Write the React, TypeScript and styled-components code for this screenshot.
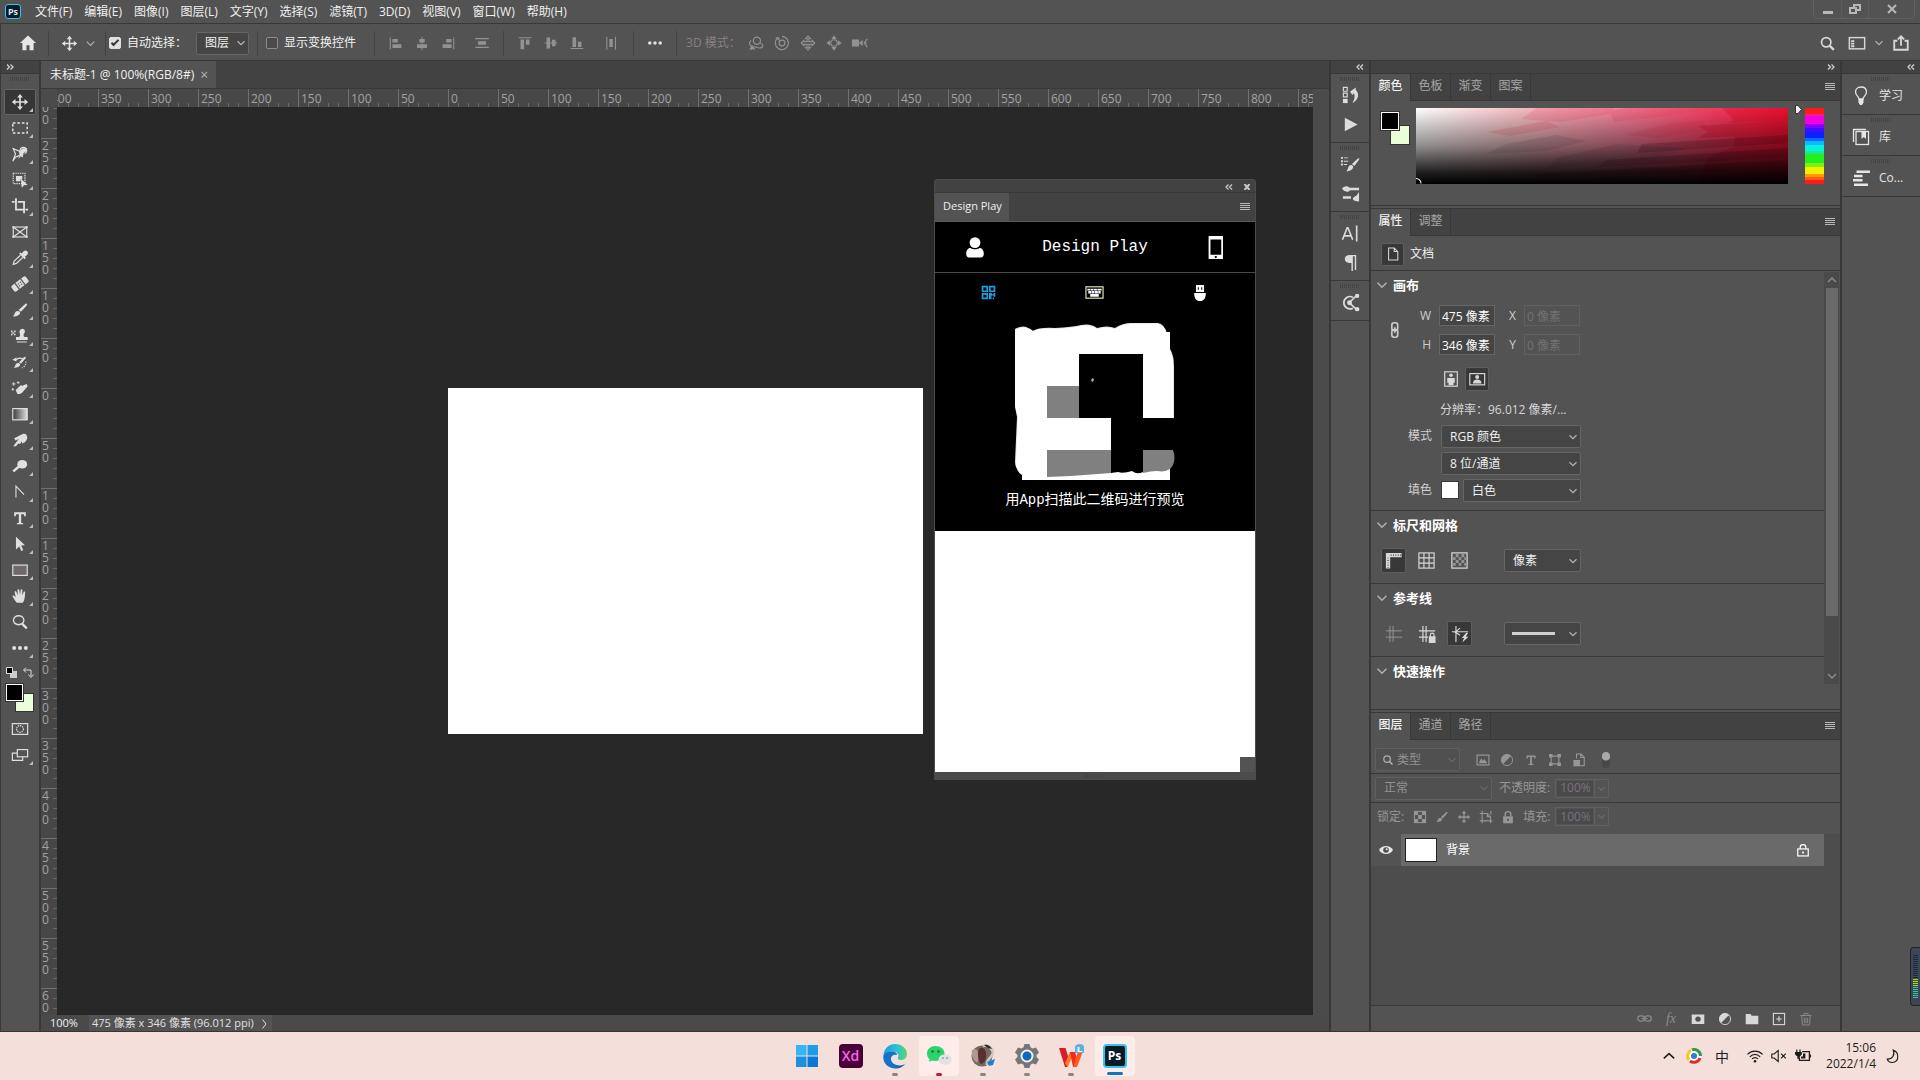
import React from "react";
import styled, { createGlobalStyle, css } from "styled-components";

const sans = `"Open Sans", "Noto Sans CJK SC", sans-serif`;

const c = {
  base: "#535353",
  dark: "#424242",
  line: "#383838",
  canvas: "#282828",
  field: "#454545",
  fieldLine: "#666666",
  text: "#f0f0f0",
  dim: "#a6a6a6",
  icon: "#d8d8d8",
};

const Global = createGlobalStyle`
  *, *::before, *::after { box-sizing: border-box; }
  html, body { margin: 0; background: ${c.base}; }
  body { font: 12px/16px ${sans}; color: ${c.text}; overflow: hidden; }
  button, input, select { font: inherit; color: inherit; margin: 0; }
  h2, h3, p { margin: 0; font: inherit; }
`;

/* ---------- icons ---------- */

const F = { fill: "currentColor", stroke: "none" };

const art: Record<string, React.ReactNode> = {
  home: <path {...F} d="M10 2.500 2 10h2.400v7.200h4.100v-5h3v5h4.100V10H18z" />,
  move: <path {...F} d="M10 1 6.800 5h2.300v4.100H5V6.800L1 10l4 3.200v-2.300h4.100V15H6.800l3.200 4 3.200-4h-2.300v-4.100H15v2.300l4-3.200-4-3.200v2.300h-4.100V5h2.300z" />,
  chevron: <path strokeWidth="1.700" d="M5 7.500 10 12.500l5-5" />,
  alignL: <g {...F}><path d="M3 4h1.200v13H3zM6 5.500h6v4H6zM6 11.500h10v4H6z" /></g>,
  alignC: <g {...F}><path d="M9.500 3h1v15h-1zM7 5.500h6v4H7zM4.500 11.500h11v4h-11z" /></g>,
  alignR: <g {...F}><path d="M15.800 4H17v13h-1.200zM8 5.500h6v4H8zM4 11.500h10v4H4z" /></g>,
  distV: <g {...F}><path d="M2.500 4.500h15v1.200h-15zM5.500 8h9v4h-9zM2.500 14.300h15v1.200h-15z" /></g>,
  alignT: <g {...F}><path d="M3 3.500h14v1.200H3zM5 6h4v11H5zM11 6h4v6h-4z" /></g>,
  alignM: <g {...F}><path d="M3 9.500h14v1H3zM5 4h4v12H5zM11 6.500h4v7h-4z" /></g>,
  alignB: <g {...F}><path d="M3 15.500h14v1.200H3zM5 3.500h4v11H5zM11 8.500h4v6h-4z" /></g>,
  distH: <g {...F}><path d="M4.800 3h1.200v14.500H4.800zM8.200 5.500h3.800v9H8.200zM14.300 3h1.200v14.500h-1.200z" /></g>,
  more: <g {...F}><circle cx="3.500" cy="10" r="2.200" /><circle cx="10" cy="10" r="2.200" /><circle cx="16.500" cy="10" r="2.200" /></g>,
  orbit: <g><circle cx="11" cy="7.500" r="4" /><path d="M4.500 7c-3 3-2 6 2 7.500M14.500 10c4 1.500 4 5 .5 5.500-2 .3-5-.5-7-1.500" /><path {...F} d="m2.500 17.500 7-.5-4-5z" /></g>,
  roll: <g><circle cx="10" cy="10" r="3.200" /><path d="M5 4.500A7.300 7.300 0 1 0 10 2.700" /><path {...F} d="M2.500 3.500h4.500v4z" /></g>,
  pan3d: <path d="M10 2 7.500 5H9v3.500H5.500V7L2.500 10l3 3v-1.500H9V15H7.500l2.500 3 2.500-3H11v-3.500h3.500V13l3-3-3-3v1.500H11V5h1.500z" />,
  slide3d: <g><circle cx="10" cy="10" r="3.600" /><path {...F} d="m10 1.500-3 4h6zM10 18.500l-3-4h6zM1.500 10l4-3v6zM18.500 10l-4-3v6z" /></g>,
  cam: <g><path {...F} d="M1 6h8v8H1zM9 10l4-3.500v7z" /><path d="M18 5.500 14.800 10l3.200 4.500M15 10h2.500" /></g>,
  search: <g><circle cx="8.500" cy="8.500" r="5.500" strokeWidth="2" /><path strokeWidth="2.600" d="m12.500 12.500 5 5" /></g>,
  layout: <g strokeWidth="1.600"><rect x="1.500" y="4" width="17" height="12.500" /><path {...F} d="M3.500 7h3.500v2H3.500zM3.500 9.800h3.500v2H3.500zM3.500 12.600h3.500v2H3.500z" /></g>,
  share: <g strokeWidth="2"><path d="M6 7.500H2.500V17.500h15V7.500H14M10 13V3M6.500 6 10 2.500 13.500 6" /></g>,
  marquee: <rect x="2" y="4.500" width="16" height="11" strokeDasharray="3 2" strokeWidth="1.600" />,
  lasso: <g><path d="M9.500 11.500 5 13.500 2 18l3-8L2.500 4l7 3L11 3.500c3-2 6.500-.5 6.500 2.500 0 2-1 3-2.500 3.500" /><path {...F} d="m9 7.500 4-4h4v3.500l-3 2-1 5-2-1.500-3 3 1.500-4z" /></g>,
  objsel: <g><rect x="2.500" y="2.500" width="13" height="11.500" strokeDasharray="1.500 1" /><path {...F} d="M5.500 5.500h7V9l-2 .5v2h-5z" /><path {...F} d="m11 8.500 7.500 7-4 .2-2.500 3z" /></g>,
  crop: <g strokeWidth="2"><path d="M5.500 1.500V14H14M1 5.500h3M7.500 5.500h7V18M16 14h3" /></g>,
  frame: <g><rect x="2.500" y="4.500" width="15" height="11" /><path d="m2.500 4.500 15 11M17.500 4.500l-15 11" /><path {...F} d="M1.500 3.500h2v2h-2zM16.500 3.500h2v2h-2zM1.500 14.500h2v2h-2zM16.500 14.500h2v2h-2z" /></g>,
  eyedrop: <g><path d="m10.500 7-7 6.500L2.500 17l3.500-1 7-6.500" /><path {...F} d="m9 5 1.500-1.200 1.500 1.200c2-3.500 4.500-4 6-2.500s1 4-2.500 6l1 1.500-1.500 1.500z" /></g>,
  heal: <g transform="rotate(-38 10 10)"><rect {...F} x="0" y="6" width="20" height="8" rx="2" /><path stroke="#535353" d="M6 6v8M14 6v8" /><circle cx="8.500" cy="8.800" r=".8" fill="#535353" stroke="none" /><circle cx="11.500" cy="8.800" r=".8" fill="#535353" stroke="none" /><circle cx="8.500" cy="11.400" r=".8" fill="#535353" stroke="none" /><circle cx="11.500" cy="11.400" r=".8" fill="#535353" stroke="none" /></g>,
  brush: <g {...F}><path d="M17.500 3c.8.500.5 1.200-.5 2.500l-6 6.500-2.500-2L15.500 3.500c.8-.8 1.500-.9 2-.5z" /><path d="M7.500 11c2 0 3 1.500 2.500 3-1 2.500-4.500 3.500-8 3 1.500-1 1.500-1.500 2-3s1.500-3 3.500-3z" /></g>,
  stamp: <g {...F}><path d="M9.500 5a3 3 0 1 1 5 2.300c-.8.900-.8 3 .5 3.700h3.500v3.500h-13V11H9c1.300-.7 1.300-2.800.8-3.700A3 3 0 0 1 9.500 5zM6.500 16h11v1.200h-11z" /><path d="M0 4h1.700v1.700H0zM3.400 4h1.700v1.700H3.400zM1.700 5.700h1.700v1.700H1.700zM0 7.400h1.700v1.700H0zM3.400 7.400h1.700v1.700H3.400z" /></g>,
  history: <g><path {...F} d="M16 4.500c.8.500.5 1-.2 2L11 12l-2-1.700 5-5.300c.8-.8 1.500-.9 2-.5zM8.200 11c1.500.2 2.300 1.300 1.800 2.700-.8 2-4 3-7 2.600 2-1 1.500-5.500 5.200-5.300z" /><path d="M5 8c2.500-2.500 5-3 8-1.500" /><path {...F} d="m1.500 7.500 4.500-2.500v4.500z" /><path strokeDasharray="1.200 1.500" d="M16.500 9.500c.5 3-1 5.500-4.500 7" /></g>,
  eraser: <g><path {...F} d="m11 8 6.500-2.500L18.500 8 12 15.500l-4 .5-2-3z" /><path d="m6 12.500 5-5 3.500 3.500-4.500 5H7.500z" /><path d="M3 3.500v4M1 5.500h4M8 2.500v3M6.500 4h3M2 10v3M.8 11.500h2.500" strokeWidth="1" /></g>,
  gradient: <g><defs><linearGradient id="tool-gradient"><stop stopColor="#3a3a3a" /><stop offset="1" stopColor="#e0e0e0" /></linearGradient></defs><rect x="2" y="4" width="16" height="12.500" fill="url(#tool-gradient)" /></g>,
  smudge: <path {...F} d="M2.500 17 8.500 9 5 10.500 3.500 8 13 3.200c3-.9 5.500 1.200 5 4.800-.5 3-2.500 5-5.500 6l-.5-2.700-1.800 3.200-2-.5-2.700 3z" />,
  dodge: <g {...F}><ellipse cx="12.500" cy="8" rx="5.500" ry="4.800" /><path d="m8 9.500 2 2-6.500 5.500-2-2z" /></g>,
  pen: <path d="M5.500 16V3.500L14.500 13" strokeWidth="1.200" />,
  type: <path {...F} d="M3.500 3.500h13V8h-1.700l-.5-2.300h-3v9.600l2.200.4v1.300H6.500v-1.300l2.200-.4V5.700h-3L5.200 8H3.500z" />,
  path: <path {...F} d="m5.500 2 10 9.500-4.300.3 2.500 5-2.200 1-2.400-5L5.500 16z" />,
  rect: <rect x="2" y="4.500" width="16" height="11.500" fill="#6f6969" />,
  hand: <path {...F} d="M6.500 17.500C4.500 15.500 3 12.500 1.500 10c1-1 2-.5 3.700 1.500L4 5.200c.9-.9 1.700-.6 2 .3l1.500 4L7.200 3c.8-.8 1.800-.6 2 .3l.8 5.700.8-6c.9-.7 1.800-.4 1.900.5l-.2 6 1.700-4.300c.9-.6 1.700-.2 1.600.8-.5 3.500 0 8-2.800 11.500z" />,
  zoom: <g><ellipse cx="8.500" cy="8" rx="5.800" ry="5" strokeWidth="1.500" /><path strokeWidth="2.600" d="m12.500 12 5 5" /></g>,
  mask: <g><rect x="1.500" y="4" width="17" height="12" /><circle cx="10" cy="10" r="3.800" strokeDasharray="1.500 1" /></g>,
  screens: <g><rect x="7" y="4" width="11.500" height="8" /><path d="M7 8H1.500v8h11.500v-4" /></g>,
  dockHistory: <g><path {...F} d="M2 13.500h5V18H2z" /><path strokeWidth="1.200" d="M2.500 1.500h4v4h-4zM2.500 7.500h4v4h-4z" /><path {...F} d="m9.500 6 6-4.500v2.700c4 3.500 3.500 10-3.500 13.800 2.500-4 3-7.500 1.500-10.300L12 9.500z" /></g>,
  play: <path {...F} d="m4 3 13.500 7L4 17z" />,
  brushSet: <g {...F}><path d="M19 3.500c.6.500.4 1-.4 2l-4.600 6-2.500-2 6-5.500c.7-.7 1-.8 1.500-.5zM10.500 10.500c1.800.2 2.700 1.500 2.200 3-.7 2.200-3.500 3.800-7.200 3.800 2.500-2 1.500-6.500 5-6.800zM0 2h2v2H0zM3 2.500h4.500v1H3zM0 5.500h2v2H0zM3 6h4.500v1H3zM0 9h2v2H0zM3 9.500h3.500v1H3z" /></g>,
  sliders: <g {...F}><path d="M1 5c3-3.500 6-3 8-1h10v2.500H9.500C8 9 4 8.500 1 5zM2 13h8.500v2.500H2z" /><path d="M19 8.500V18.500c-6 0-9-3-4-5.500 2-.8 2.500-2.500 4-4.500z" /></g>,
  char: <path d="M1.500 16.500 6.500 4h.8l5 12.500M3.500 12.500h7M16.500 1.500v17" strokeWidth="1.700" />,
  para: <path {...F} d="M16 2v16h-1.500V3.500h-2V19h-1.500v-8.500C7 11 4 9.500 4 6.300 4 3.500 6.500 2 9.500 2z" />,
  plugin: <g><path strokeWidth="1.800" d="M12.500 4.500A6.500 6.500 0 1 0 12.500 16" /><circle {...F} cx="9" cy="10.200" r="2.600" /><path strokeWidth="1.600" d="m10 9 6-6M10 11.500l6 5.500" /><circle {...F} cx="17" cy="3" r="2.300" /><circle {...F} cx="17" cy="17" r="2.300" /></g>,
  bulb: <g><path d="M8 13c0-2.500-3.500-3.500-3.500-7C4.500 3 6.700 1 10 1s5.500 2 5.500 5c0 3.500-3.500 4.500-3.500 7z" /><path {...F} d="M7.500 13h5v3.500L11 19H9l-1.500-2.500z" /></g>,
  library: <g><path d="M2.500 15V2.500H15" /><rect x="5" y="4.500" width="12.500" height="13" /><path {...F} d="M10.500 5h4.500v7l-2.200-2-2.300 2z" /></g>,
  comments: <path {...F} d="M5.500 2.500H19V5H5.500zM3 6.800h8.500v2.500H3zM2 11h9.500v2.500H2zM3 15.500h14V18H3z" />,
  doc: <path d="M4.500 2.500h7l4.500 4.500v10.500H4.500zM11.500 2.500V7H16" />,
  link: <g strokeWidth="1.800"><rect x="6.500" y="2" width="6.500" height="8.500" rx="2.500" /><rect x="6.500" y="9.500" width="6.500" height="8.500" rx="2.500" /><path d="M9.800 7v6" /></g>,
  portrait: <g><rect x="3" y="2" width="14" height="16" /><circle {...F} cx="10" cy="5.800" r="2" /><path {...F} d="M5.800 9h8.400v5.300h-1.500V17h-5.400v-2.700H5.800z" /></g>,
  landscape: <g><rect x="2" y="4" width="16.500" height="12.500" /><circle {...F} cx="10.200" cy="7.700" r="2.200" /><path {...F} d="M5.500 15c0-3.200 1.700-4.500 4.700-4.500s4.800 1.300 4.800 4.500z" /></g>,
  rulers: <g><path {...F} d="M2 2h16.500v4.500H6.500v12H2z" /><path stroke="#383838" strokeWidth="1.200" strokeDasharray="1 1.500" d="M7 4.300h11M4.300 7v11" /></g>,
  grid: <g strokeWidth="1.200"><rect x="2" y="2" width="16" height="16" /><path d="M7.300 2v16M12.700 2v16M2 7.300h16M2 12.700h16" /></g>,
  checker: <g><rect x="2" y="2" width="16" height="16" /><path fill="#949494" stroke="none" d="M6 3h3v3.500H6zM12 3h3v3.500h-3zM3 6.500h3v3H3zM9 6.500h3v3H9zM15 6.500h2.500v3H15zM6 9.500h3v3H6zM12 9.500h3v3h-3zM3 12.500h3v3H3zM9 12.500h3v3H9zM15 12.500h2.500v3H15z" /></g>,
  guides: <path strokeWidth="1" d="M5.500 1v18M9 1v18M1 6.500h18M1 13.500h18" />,
  guidesLock: <g><path strokeWidth="1.300" d="M5.500 1v18M9 1v18M1 6.500h18M1 13.500h10" /><path {...F} d="M12 12.500h7.500V20H12z" /><path d="M13.800 13v-2a2 2 0 0 1 4 0v2" /></g>,
  guidesSmart: <g><path strokeWidth="1.300" d="M5.500 1v18M1 7.500h18M4 8.500l6-5M5 8l5 3.500" /><path {...F} d="m17 8.500-5 6h2.500l-2 5 7-6.500h-3l2.500-4.500z" /></g>,
  image: <g><rect x="1.500" y="3" width="17" height="14" strokeWidth="1.700" /><path {...F} d="m4 14.500 3.500-7 2.500 4 2-3 4 6z" /></g>,
  adjust: <g><circle cx="10" cy="10" r="8" /><path {...F} d="M15.700 4.300A8 8 0 0 0 4.300 15.700z" /></g>,
  shape: <g><path strokeWidth="1.600" d="M4.500 4.500h11v11h-11z" /><path {...F} d="M1.500 1.500h5v5h-5zM13.500 1.500h5v5h-5zM1.500 13.500h5v5h-5zM13.500 13.500h5v5h-5z" /></g>,
  smart: <g strokeWidth="1.600"><path d="M6.500 8V1.500H13l4.500 4.500v12H12M12.500 1.500v5H17.500" /><path {...F} d="M2 10h9.500v9H2z" /></g>,
  checkerSolid: <g><rect x="2" y="2" width="16" height="16" strokeWidth="1.500" /><path {...F} d="M2 2h5.300v5.300H2zM12.700 2H18v5.300h-5.300zM7.300 7.300h5.400v5.400H7.300zM2 12.700h5.300V18H2zM12.700 12.700H18V18h-5.300z" /></g>,
  artboard: <path strokeWidth="1.600" d="M4.500 1v18M1 5h11l4.500 4.500V19M1 15.500h18M17 1.500v5M12 5v4.500h4.500" />,
  lock: <g><path {...F} d="M3 9h14v10H3z" /><path strokeWidth="2" d="M6 9V6c0-5 8-5 8 0v3" /><circle cx="10" cy="14" r="1.600" fill="#535353" stroke="none" /></g>,
  lockOpen: <g strokeWidth="1.700"><rect x="2.500" y="8.500" width="15" height="10" /><path d="M6 8.500V6c0-5 8-5 8 0v2.500" /><circle {...F} cx="10" cy="13.500" r="1.500" /></g>,
  eye: <g><path {...F} d="M0 10c4-7.500 16-7.500 20 0-4 7.500-16 7.500-20 0z" /><circle cx="10" cy="10" r="4" fill="#4d4d4d" stroke="none" /><circle {...F} cx="11" cy="9" r="1.500" /></g>,
  chain: <g strokeWidth="1.600"><rect x="1" y="6.500" width="9" height="7" rx="3.500" /><rect x="10" y="6.500" width="9" height="7" rx="3.500" /><path d="M6 10h8" /></g>,
  maskAdd: <path {...F} fillRule="evenodd" d="M1 3.500h18v13.500H1zM10 6.300a3.900 3.900 0 1 0 .01 0z" />,
  folder: <path {...F} d="M1 3h7l1.500 2.500H19v12H1z" />,
  add: <g><rect x="2" y="2" width="16" height="16" strokeWidth="1.600" /><path d="M10 6v8M6 10h8" strokeWidth="1.600" /></g>,
  trash: <path d="M2 5h16M7 4.500V2h6v2.500M4 5l.8 13.500h10.400L16 5M7.600 8v8M10 8v8M12.400 8v8" />,
  user: <g {...F}><circle cx="10" cy="6" r="4.900" /><path d="M2 16c0-3.500 2-5.200 4-5.200 2.500 1.800 5.500 1.800 8 0 2 0 4 1.700 4 5.200 0 2-1 3.500-2.500 3.500h-11C3 19.500 2 18 2 16z" /></g>,
  phone: <path {...F} fillRule="evenodd" d="M4 0h12.500v20H4zM5.600 3v13.300H15V3zM10.200 17.300a.9.900 0 1 0 .1 0z" />,
  qr: <g {...F} fillRule="evenodd"><path d="M2 2h7.500v7.500H2zM4 4v3.500h3.500V4zM10.500 2H18v7.500h-7.500zM12.500 4v3.500H16V4zM2 10.500h7.500V18H2zM4 12.500V16h3.500v-3.500zM10.500 10.500H14V12h2v-1.500h2V15h-2v-1.500h-2.500V18h-3zM15 16h1.500v2H15z" /></g>,
  keyboard: <g><rect x="1" y="4" width="18" height="12" stroke="#d8d8b0" /><path {...F} d="M2.500 6h3v2h-3zM6 6h3v2H6zM9.500 6h3v2h-3zM13 6h4.500v2H13zM3.500 8.500h3v2.500h-3zM7 8.500h3v2.500H7zM10.500 8.500h3v2.500h-3zM14 8.500h2.500v2.500H14zM5.500 11.500h9V14.500h-9z" /></g>,
  usb: <g {...F} fillRule="evenodd"><path d="M5.500 1h9v8h-9zM7.500 3.500v3h1.200v-3zM11.300 3.500v3h1.200v-3zM3.500 10h13c0 5.500-2 9-6.500 9s-6.500-3.500-6.500-9z" /></g>,
  up: <path d="m3.500 13 6.500-6 6.500 6" strokeWidth="1.800" />,
  wifi: <g strokeWidth="1.500"><path d="M.5 8c5.500-5.500 13.500-5.500 19 0M3.500 11c4-4 9-4 13 0M6.300 13.700c2.200-2.300 5.200-2.300 7.400 0" /><circle {...F} cx="10" cy="16.500" r="1.600" /></g>,
  mute: <path strokeWidth="1.400" d="M1 7.500h3L9 3v14l-5-4.500H1zM12.500 7l6 6M18.500 7l-6 6" />,
  battery: <g><path strokeWidth="1.600" d="M9 4.500h9v11H5.500v-3" /><path {...F} d="M18.500 8H20v4h-1.500zM10 7h3v6H7.500v-2.500H10zM0 5h1.500V2h1.500v3h2.500V2H7v3h1.500v3L6 10.500v3H3v-3L0 8z" /></g>,
  moon: <path strokeWidth="1.500" d="M11 1.500c8.500 3 8 16-1 16.500-3.500.3-6-1.500-7-4.500 7 0 10.500-5.500 8-12z" />,
};

const Svg = styled.svg<{ $size: number }>`
  display: block;
  flex: none;
  width: ${(p) => p.$size}px;
  height: ${(p) => p.$size}px;
  fill: none;
  stroke: currentColor;
  stroke-width: 1.3;
`;

const Icon = ({ name, size = 20 }: { name: string; size?: number }) => (
  <Svg $size={size} viewBox="0 0 20 20" aria-hidden="true">
    {art[name]}
  </Svg>
);

/* ---------- shared controls ---------- */

const IconButton = styled.button<{ $w?: number; $h?: number; $on?: boolean; $tone?: string }>`
  display: flex;
  align-items: center;
  justify-content: center;
  flex: none;
  width: ${(p) => p.$w ?? 24}px;
  height: ${(p) => p.$h ?? 24}px;
  padding: 0;
  border: 1px solid ${(p) => (p.$on ? "#5e5e5e" : "transparent")};
  border-radius: 2px;
  background: ${(p) => (p.$on ? "#383838" : "transparent")};
  color: ${(p) => p.$tone ?? c.icon};
`;

const SelectBox = styled.div<{ $w: number; $off?: boolean; $pad?: number }>`
  display: grid;
  align-items: center;
  flex: none;
  width: ${(p) => p.$w}px;
  height: 23px;
  border: 1px solid ${(p) => (p.$off ? "#606060" : c.fieldLine)};
  border-radius: 2px;
  background: ${(p) => (p.$off ? "#505050" : c.field)};
  color: ${(p) => (p.$off ? "#929292" : c.text)};
  > * { grid-area: 1 / 1; }
  > svg { pointer-events: none; }
  > svg:last-child { justify-self: end; color: ${(p) => (p.$off ? "#686868" : "#b4b4b4")}; }
  select {
    appearance: none;
    width: 100%;
    height: 100%;
    padding: 0 16px 0 ${(p) => p.$pad ?? 8}px;
    border: 0;
    background: none;
  }
`;

type SelectProps = { id?: string; label: string; value: string; w: number; off?: boolean; pad?: number; children?: React.ReactNode };
const Select = ({ id, label, value, w, off, pad, children }: SelectProps) => (
  <SelectBox $w={w} $off={off} $pad={pad}>
    <select id={id} aria-label={label}><option>{value}</option></select>
    {children}
    <Icon name="chevron" size={14} />
  </SelectBox>
);

const Check = styled.input`
  appearance: none;
  width: 12px;
  height: 12px;
  border: 1px solid #8c8c8c;
  border-radius: 2px;
  background: #4a4a4a;
  &:checked {
    border-color: #e0e0e0;
    background: #e0e0e0;
    display: grid;
    place-items: center;
  }
  &:checked::before {
    content: "";
    width: 8px;
    height: 4px;
    margin-bottom: 2px;
    border: solid #383838;
    border-width: 0 0 2px 2px;
    transform: rotate(-45deg);
  }
`;

const CheckLabel = styled.label`
  display: flex;
  align-items: center;
  gap: 6px;
  white-space: nowrap;
`;

/* ---------- application bars ---------- */

const Shell = styled.div`
  display: flex;
  flex-direction: column;
  height: 100vh;
  background: ${c.base};
`;

const MenuBar = styled.header`
  display: flex;
  align-items: center;
  flex: none;
  height: 24px;
  padding-left: 5px;
  border-bottom: 1px solid ${c.line};
`;

const PsMark = styled.span<{ $big?: boolean }>`
  display: grid;
  place-items: center;
  width: ${(p) => (p.$big ? 24 : 16)}px;
  height: ${(p) => (p.$big ? 24 : 15)}px;
  border: ${(p) => (p.$big ? 2 : 1)}px solid #31c5f0;
  border-radius: ${(p) => (p.$big ? 4 : 3)}px;
  background: #0a1a26;
  color: ${(p) => (p.$big ? "#fff" : "#c9f1ff")};
  font: 700 ${(p) => (p.$big ? 12 : 9)}px/12px ${sans};
`;

const Menu = styled.nav`
  display: flex;
  flex: 1;
  padding-left: 8px;
`;

const MenuItem = styled.button`
  padding: 0 6px;
  border: 0;
  background: none;
  white-space: nowrap;
`;

const WindowControls = styled.div`
  display: flex;
  align-self: flex-start;
  margin-right: 5px;
  border: solid #616161;
  border-width: 0 1px 1px;
  border-radius: 0 0 4px 4px;
`;

const WindowButton = styled.button<{ $w: number }>`
  display: grid;
  place-items: center;
  width: ${(p) => p.$w}px;
  height: 18px;
  padding: 0;
  border: 0;
  border-left: 1px solid #5c5c5c;
  background: none;
  color: #b8b8b8;
  &:first-child { border-left: 0; }
`;

const OptionsBar = styled.div`
  display: flex;
  align-items: center;
  flex: none;
  height: 37px;
  padding: 2px 7px 0 4px;
  border-left: 1px solid ${c.line};
  border-bottom: 1px solid ${c.line};
`;

const Divider = styled.span<{ $m?: number }>`
  flex: none;
  width: 1px;
  height: 25px;
  margin: 0 ${(p) => p.$m ?? 8}px;
  background: #434343;
`;

const Spacer = styled.span<{ $w?: number }>`
  flex: ${(p) => (p.$w ? "none" : "1")};
  width: ${(p) => (p.$w ? p.$w + "px" : "auto")};
`;

const ModeLabel = styled.span`
  margin-right: 2px;
  color: #8a8080;
  white-space: nowrap;
`;

/* ---------- workspace ---------- */

const Workspace = styled.div`
  display: flex;
  flex: 1;
  min-height: 0;
  background: ${c.line};
  gap: 2px;
`;

const Strip = styled.div<{ $left?: boolean }>`
  display: flex;
  align-items: center;
  justify-content: ${(p) => (p.$left ? "flex-start" : "flex-end")};
  flex: none;
  height: 13px;
  padding: 0 5px;
  border-bottom: 1px solid ${c.line};
  background: ${c.dark};
  color: #d0d0d0;
`;

const StripButton = styled.button`
  display: block;
  padding: 0;
  border: 0;
  background: none;
  svg { display: block; width: 8px; height: 6px; fill: none; stroke: currentColor; stroke-width: 1.3; }
`;

const Collapse = ({ right, label }: { right?: boolean; label: string }) => (
  <StripButton aria-label={label}>
    <svg viewBox="0 0 8 6"><path d={right ? "m1 .5 2.500 2.500L1 5.500M4.500.5 7 3 4.500 5.500" : "M3.500.5 1 3l2.500 2.500M7 .5 4.500 3 7 5.500"} /></svg>
  </StripButton>
);

const Grip = styled.span`
  display: block;
  flex: none;
  width: 20px;
  height: 4px;
  background: repeating-linear-gradient(to right, #444 0 1px, transparent 1px 2px);
`;

const Toolbar = styled.aside`
  display: flex;
  flex-direction: column;
  flex: none;
  width: 39px;
  border-left: 1px solid ${c.line};
  background: ${c.base};
`;

const ToolList = styled.div`
  display: flex;
  flex-direction: column;
  align-items: center;
  padding: 2px 1px 0 0;
`;

const Tool = styled.button<{ $on?: boolean; $corner?: boolean }>`
  display: grid;
  place-items: center;
  width: 32px;
  height: 26px;
  padding: 0;
  border: 1px solid ${(p) => (p.$on ? "#646464" : "transparent")};
  border-radius: 2px;
  background: ${(p) => (p.$on ? "#363636" : "none")};
  color: #e0e0e0;
  ${(p) => p.$corner && css`
    &::after {
      content: "";
      grid-area: 1 / 1;
      place-self: end;
      margin: 0 2px 2px 0;
      border: 2px solid;
      border-color: transparent #bdbdbd #bdbdbd transparent;
    }
  `}
  > svg { grid-area: 1 / 1; }
`;

const GripRow = styled.div`
  display: flex;
  justify-content: center;
  padding-top: 1px;
  height: 13px;
`;

const SwatchTools = styled.div`
  display: flex;
  align-items: center;
  justify-content: space-between;
  width: 28px;
  height: 22px;
  svg { width: 11px; height: 11px; }
`;

const Swatches = styled.div<{ $w: number; $h: number; $s: number; $my?: number }>`
  display: grid;
  flex: none;
  width: ${(p) => p.$w}px;
  height: ${(p) => p.$h}px;
  margin: ${(p) => p.$my ?? 0}px 0;
  > button {
    grid-area: 1 / 1;
    width: ${(p) => p.$s}px;
    height: ${(p) => p.$s}px;
    padding: 0;
    border: 1px solid #333;
  }
  > button:first-child { place-self: end; background: #e8ffd8; }
  > button:last-child { place-self: start; background: #000; box-shadow: inset 0 0 0 1px #fff; }
`;

const ToolFoot = styled.div`
  display: flex;
  flex-direction: column;
  align-items: center;
  padding-top: 4px;
`;

const Document = styled.main`
  display: flex;
  flex-direction: column;
  flex: 1;
  min-width: 0;
  background: ${c.dark};
`;

const DocTabs = styled.div`
  display: flex;
  flex: none;
  height: 28px;
  border-bottom: 1px solid ${c.line};
`;

const DocTab = styled.div`
  display: flex;
  align-items: center;
  gap: 4px;
  padding: 1px 6px 0 9px;
  background: ${c.base};
  white-space: nowrap;
  button { width: 12px; padding: 0; border: 0; background: none; color: #b4b4b4; font-size: 14px; line-height: 12px; }
`;

const DocBody = styled.div`
  display: grid;
  grid-template: 18px minmax(0, 1fr) / 16px minmax(0, 1fr) 16px;
  flex: 1;
  min-height: 0;
`;

const RulerCorner = styled.div`
  background: #4b4b4b;
`;

const rulerText = css`
  font: 12px/12px ${sans};
  color: #a2a2a2;
`;

const HRuler = styled.div`
  display: flex;
  overflow: hidden;
  background: #474747;
  ${rulerText}
  > span:first-child { margin-left: -9px; }
`;

const HCell = styled.span`
  flex: none;
  width: 50px;
  padding: 4px 0 0 2px;
  border-left: 1px solid #707070;
  background: repeating-linear-gradient(to right, transparent 0 9px, #686868 9px 10px) 0 100% / 49px 4px no-repeat;
`;

const VRuler = styled.div`
  display: flex;
  flex-direction: column;
  overflow: hidden;
  background: #474747;
  ${rulerText}
  > span:first-child { margin-top: -19px; }
`;

const VCell = styled.span`
  display: flex;
  flex-direction: column;
  flex: none;
  height: 50px;
  padding: 1px 0 0 1px;
  border-top: 1px solid #707070;
  background: repeating-linear-gradient(to bottom, transparent 0 9px, #686868 9px 10px) 100% 0 / 4px 49px no-repeat;
`;

const Viewport = styled.div`
  position: relative;
  overflow: hidden;
  background: ${c.canvas};
`;

const Artboard = styled.div`
  position: absolute;
  left: 391px;
  top: 281px;
  width: 475px;
  height: 346px;
  background: #fff;
`;

const ScrollColumn = styled.div`
  grid-column: 3;
  grid-row: 1 / 3;
  background: #4b4b4b;
`;

const StatusBar = styled.footer`
  display: flex;
  align-items: center;
  flex: none;
  height: 16px;
  padding-left: 9px;
  gap: 11px;
  background: #4a4a4a;
  font-size: 11px;
`;

const StatusInfo = styled.button`
  display: flex;
  gap: 8px;
  padding: 0 5px 0 3px;
  border: 0;
  background: #535353;
  line-height: 16px;
  color: #e0e0e0;
  svg { width: 5px; height: 10px; margin-top: 4px; fill: none; stroke: currentColor; }
`;

/* ---------- floating extension panel ---------- */

const Floating = styled.section`
  position: absolute;
  left: 877px;
  top: 72px;
  width: 322px;
  border: 1px solid #4c4c4c;
  border-radius: 3px 3px 0 0;
  background: ${c.dark};
`;

const FloatStrip = styled.div`
  display: flex;
  align-items: center;
  justify-content: flex-end;
  gap: 10px;
  height: 13px;
  padding: 1px 4px 0 0;
  border-bottom: 1px solid ${c.line};
  color: #c8c8c8;
`;

const FloatTabs = styled.div`
  display: flex;
  justify-content: space-between;
  align-items: stretch;
  height: 29px;
  border-bottom: 1px solid #5a5a5a;
`;

const FloatTab = styled.div`
  display: flex;
  align-items: center;
  padding: 0 7px 2px 8px;
  background: ${c.base};
  font-size: 11px;
`;

const MenuLines = styled.button`
  align-self: center;
  width: 10px;
  height: 8px;
  padding: 0;
  margin-right: 5px;
  border: 0;
  background: repeating-linear-gradient(to bottom, #b8b8b8 0 1px, transparent 1px 2px);
`;

const Play = styled.div`
  background: #000;
  color: #fff;
  font-family: "Liberation Mono", "Noto Sans CJK SC", monospace;
  height: 309px;
  text-align: center;
`;

const PlayHead = styled.div`
  display: grid;
  grid-template-columns: 80px 1fr 80px;
  align-items: center;
  justify-items: center;
  height: 51px;
  border-bottom: 1px solid #4a4a4a;
  h2 { font-size: 16px; line-height: 20px; }
`;

const PlayModes = styled.div`
  display: grid;
  grid-template-columns: repeat(3, 1fr);
  justify-items: center;
  align-items: center;
  height: 39px;
  margin-bottom: 10px;
  padding-right: 2px;
`;

const Code = styled.svg`
  display: block;
  width: 160px;
  height: 160px;
  margin: 0 auto;
`;

const Caption = styled.p`
  font-size: 14px;
  line-height: 18px;
  padding-top: 9px;
`;

const PlayBlank = styled.div`
  display: flex;
  align-items: flex-end;
  justify-content: flex-end;
  height: 241px;
  background: #fff;
  span { width: 15px; height: 15px; background: ${c.base}; }
`;

const FloatFoot = styled.div`
  display: flex;
  justify-content: center;
  height: 7px;
  background: #4b4b4b;
  padding-top: 2px;
`;

/* ---------- docks & panels ---------- */

const Dock = styled.aside<{ $w: number }>`
  display: flex;
  flex-direction: column;
  flex: none;
  width: ${(p) => p.$w}px;
  background: ${c.base};
`;

const DockGroup = styled.div`
  display: flex;
  flex-direction: column;
  align-items: center;
  padding: 3px 0 3px;
  border-bottom: 1px solid ${c.line};
`;

const DockItem = styled.button`
  display: flex;
  align-items: center;
  gap: 8px;
  width: 100%;
  height: 30px;
  padding: 0 0 0 9px;
  border: 0;
  background: none;
  color: #e6e6e6;
`;

const Panels = styled.aside`
  display: flex;
  flex-direction: column;
  flex: none;
  width: 469px;
  background: ${c.base};
`;

const Panel = styled.section<{ $grow?: boolean }>`
  display: flex;
  flex-direction: column;
  flex: ${(p) => (p.$grow ? "1" : "none")};
  min-height: 0;
  & + & { border-top: 1px solid ${c.line}; margin-top: 2px; }
  border-bottom: ${(p) => (p.$grow ? "0" : `1px solid ${c.line}`)};
`;

const TabBar = styled.div`
  display: flex;
  flex: none;
  height: 27px;
  border-bottom: 1px solid ${c.line};
  background: ${c.dark};
`;

const Tab = styled.button<{ $on?: boolean }>`
  width: 40px;
  height: ${(p) => (p.$on ? 27 : 26)}px;
  padding: 0 0 3px;
  border: 0;
  border-right: 1px solid ${c.line};
  background: ${(p) => (p.$on ? c.base : "none")};
  color: ${(p) => (p.$on ? c.text : c.dim)};
  font-weight: ${(p) => (p.$on ? 500 : 400)};
`;

const Tabs = ({ names }: { names: string[] }) => (
  <TabBar>
    {names.map((n, i) => <Tab key={n} $on={i === 0}>{n}</Tab>)}
    <Spacer />
    <MenuLines aria-label="面板菜单" />
  </TabBar>
);

const ColorBody = styled.div`
  display: flex;
  height: 104px;
  padding: 7px 16px 0 9px;
`;

const Ramp = styled.svg`
  flex: 1;
  height: 76px;
  margin-left: 6px;
  min-width: 0;
`;

const HueMark = styled.svg`
  width: 7px;
  height: 9px;
  margin: -3px 3px 0 7px;
`;

const Hue = styled.div`
  width: 19px;
  height: 76px;
  background: linear-gradient(to bottom,
    #ff1a1a 0 8%, #f0208c 8% 11%, #f400e0 11% 21%, #8a00ff 21% 26%, #3c10ff 26% 31%,
    #1020ff 31% 40%, #0a6cff 40% 44%, #10b8ff 44% 49%, #00f4e0 49% 56%, #20e890 56% 61%,
    #20f020 61% 73%, #80f010 73% 78%, #f0f000 78% 87%, #ff9a00 87% 91%, #ff5a10 91% 95%, #ff1a1a 95%);
`;

const DocRow = styled.div`
  display: flex;
  align-items: center;
  gap: 6px;
  flex: none;
  height: 35px;
  padding: 2px 0 0 10px;
  border-bottom: 1px solid ${c.line};
`;

const PropBody = styled.div`
  display: flex;
  height: 438px;
`;

const PropScroll = styled.div`
  flex: 1;
  min-width: 0;
  overflow: hidden;
`;

const ScrollBar = styled.div`
  display: flex;
  flex-direction: column;
  align-items: center;
  width: 15px;
  height: 412px;
  margin: 1px 1px 0 0;
  background: #4a4a4a;
  color: #8c8c8c;
  > span { width: 12px; height: 328px; background: #6a6a6a; }
  > svg:first-child { transform: rotate(180deg); }
  > svg:last-child { margin-top: auto; }
`;

const Section = styled.section<{ $h?: number; $last?: boolean }>`
  height: ${(p) => p.$h ?? 73}px;
  border-bottom: ${(p) => (p.$last ? "0" : `1px solid ${c.line}`)};
`;

const SectionHead = styled.h3`
  display: flex;
  align-items: center;
  gap: 2px;
  height: 28px;
  padding-left: 2px;
  font-size: 13px;
  font-weight: 700;
  color: #fff;
  svg { color: #b0b0b0; }
`;

const SizeGrid = styled.div`
  display: grid;
  grid-template-columns: 47px 21px 56px 29px 56px;
  row-gap: 8px;
  padding-top: 6px;
  color: #cfcfcf;
  > svg { grid-row: 1 / 3; place-self: center; }
  label { text-align: right; padding: 3px 8px 0 0; }
`;

const Field = styled.input<{ $off?: boolean }>`
  width: 56px;
  height: 21px;
  padding: 0 2px;
  border: 1px solid ${(p) => (p.$off ? "#606060" : c.fieldLine)};
  background: ${(p) => (p.$off ? "transparent" : c.field)};
  color: ${(p) => (p.$off ? "#727272" : "#fff")};
`;

const Orient = styled.div`
  display: flex;
  gap: 2px;
  padding: 12px 0 11px 68px;
`;

const Resolution = styled.p`
  padding-left: 69px;
  height: 23px;
  color: #d6d6d6;
`;

const ModeGrid = styled.div`
  display: grid;
  grid-template-columns: 61px 140px;
  gap: 4px 9px;
  color: #cfcfcf;
  > label { text-align: right; padding-top: 3px; }
`;

const FillPick = styled.div`
  display: flex;
  justify-content: space-between;
  grid-column: 2;
`;

const FillChip = styled.button`
  width: 18px;
  height: 18px;
  margin-top: 2px;
  padding: 0;
  border: 1px solid ${c.line};
  background: #fff;
`;

const ToolRow = styled.div`
  display: flex;
  align-items: center;
  gap: 8px;
  padding: 9px 0 0 10px;
  > div { margin-left: 24px; }
`;

const Row = styled.div<{ $h: number; $line?: boolean; $top?: number; $bottom?: number }>`
  display: flex;
  align-items: center;
  flex: none;
  height: ${(p) => p.$h}px;
  padding: ${(p) => p.$top ?? 0}px 0 ${(p) => p.$bottom ?? 0}px 4px;
  border-bottom: ${(p) => (p.$line ? `1px solid ${c.line}` : "0")};
  color: #969696;
  label, > span { white-space: nowrap; }
`;

const FilterBox = styled.div`
  display: grid;
  align-items: center;
  > * { grid-area: 1 / 1; }
  > svg { margin-left: 7px; color: #b0b0b0; }
`;

const Icons = styled.div<{ $gap: number; $left: number; $right: number }>`
  display: flex;
  gap: ${(p) => p.$gap}px;
  padding: 0 ${(p) => p.$right}px 0 ${(p) => p.$left}px;
`;

const Toggle = styled.button`
  width: 8px;
  height: 16px;
  padding: 0;
  border: 0;
  border-radius: 4px;
  background: radial-gradient(circle at 4px 4px, #a8a8a8 4px, transparent 5px), #484848;
`;

const Percent = styled.div`
  display: flex;
  width: 54px;
  height: 19px;
  margin-left: 5px;
  border: 1px solid #606060;
  color: #6c6c6c;
  input {
    width: 38px;
    padding: 0 3px;
    border: 1px solid #535353;
    background: #4a4a4a;
    color: #7c7080;
  }
  button { display: grid; place-items: center; flex: 1; padding: 0; border: 0; border-left: 1px solid #606060; background: none; }
`;

const LayerArea = styled.div`
  flex: 1;
  min-height: 0;
  background: #4d4d4d;
`;

const LayerRow = styled.div`
  display: flex;
  height: 32px;
  margin-right: 16px;
  background: ${c.base};
`;

const LayerMain = styled.div`
  display: flex;
  align-items: center;
  flex: 1;
  padding: 0 14px 0 4px;
  background: #6a6a6a;
  color: #fff;
`;

const Thumb = styled.span`
  width: 32px;
  height: 24px;
  margin-right: 9px;
  border: 1px solid #222;
  background: #fff;
`;

const LayerFoot = styled.div`
  display: flex;
  align-items: center;
  justify-content: flex-end;
  gap: 3px;
  flex: none;
  height: 26px;
  padding-right: 22px;
  border-top: 1px solid ${c.line};
`;

const Fx = styled.span`
  font: italic 14px/16px "Liberation Serif", serif;
`;

const Meter = styled.div`
  position: absolute;
  right: 0;
  bottom: 74px;
  width: 10px;
  height: 59px;
  padding: 7px 2px;
  border: 1px solid #222;
  border-right: 0;
  border-radius: 4px 0 0 4px;
  background: #3c4654;
  &::before {
    content: "";
    display: block;
    height: 100%;
    background:
      repeating-linear-gradient(to bottom, transparent 0 1px, #3c4654 1px 2px),
      linear-gradient(to bottom, #1c2840 56%, #a4dc30 56% 75%, #34c8a0 75%);
  }
`;

/* ---------- taskbar ---------- */

const Taskbar = styled.footer`
  display: grid;
  grid-template-columns: 1fr auto 1fr;
  align-items: center;
  flex: none;
  height: 49px;
  border-top: 1px solid #3c3434;
  background: #f5dfda;
  color: #1c1c1c;
`;

const Apps = styled.div`
  display: flex;
  gap: 4px;
  grid-column: 2;
  padding-left: 1px;
`;

const AppButton = styled.button<{ $lit?: boolean; $mark?: string; $wide?: boolean }>`
  display: grid;
  justify-items: center;
  align-content: center;
  width: 40px;
  height: 40px;
  padding: 0;
  border: 0;
  border-radius: 4px;
  background: ${(p) => (p.$lit ? "#fdecea" : "none")};
  > svg { width: 26px; height: 26px; }
  &::after {
    content: "";
    width: ${(p) => (p.$wide ? 16 : 6)}px;
    height: 3px;
    margin-bottom: -7px;
    margin-top: 4px;
    border-radius: 2px;
    background: ${(p) => p.$mark ?? "transparent"};
  }
`;

const XdMark = styled.span`
  display: grid;
  place-items: center;
  width: 24px;
  height: 24px;
  margin: 1px;
  border-radius: 4px;
  background: #470137;
  color: #ff61f6;
  font: 600 14px/20px ${sans};
`;

const Tray = styled.div`
  display: flex;
  align-items: center;
  justify-content: flex-end;
  padding-right: 20px;
`;

const TrayButton = styled.button<{ $w: number }>`
  display: grid;
  place-items: center;
  width: ${(p) => p.$w}px;
  height: 24px;
  padding: 0;
  border: 0;
  background: none;
`;

const Ime = styled.span`
  font: 400 14px/24px "Noto Sans CJK SC", sans-serif;
`;

const Clock = styled.time`
  width: 61px;
  margin-right: 8px;
  text-align: right;
  line-height: 16px;
`;

/* ---------- content ---------- */

const menus = ["文件(F)", "编辑(E)", "图像(I)", "图层(L)", "文字(Y)", "选择(S)", "滤镜(T)", "3D(D)", "视图(V)", "窗口(W)", "帮助(H)"];

const tools = [
  ["move", "移动工具"], ["marquee", "矩形选框"], ["lasso", "套索"], ["objsel", "对象选择"], ["crop", "裁剪"],
  ["frame", "图框"], ["eyedrop", "吸管"], ["heal", "修复画笔"], ["brush", "画笔"], ["stamp", "仿制图章"],
  ["history", "历史记录画笔"], ["eraser", "橡皮擦"], ["gradient", "渐变"], ["smudge", "涂抹"], ["dodge", "减淡"],
  ["pen", "钢笔"], ["type", "文字"], ["path", "路径选择"], ["rect", "矩形"], ["hand", "抓手"],
  ["zoom", "缩放"], ["more", "编辑工具栏"],
];
const plainTools = ["frame", "zoom"];

const hMarks = Array.from({ length: 26 }, (_, i) => Math.abs(-400 + i * 50));
const vMarks = Array.from({ length: 19 }, (_, i) => Math.abs(-300 + i * 50));

const ColorRamp = () => (
  <Ramp viewBox="0 0 371 76" preserveAspectRatio="none" role="img" aria-label="颜色斜面">
    <defs>
      <linearGradient id="sat"><stop stopColor="#fff" /><stop offset=".25" stopColor="#f6c4c8" /><stop offset=".55" stopColor="#f08098" /><stop offset=".8" stopColor="#f43c60" /><stop offset="1" stopColor="#f01434" /></linearGradient>
      <linearGradient id="val" x1="0" y1="0" x2="0" y2="1"><stop stopOpacity="0" /><stop offset=".5" stopOpacity=".44" /><stop offset=".85" stopOpacity=".88" /><stop offset="1" /></linearGradient>
    </defs>
    <rect width="371" height="76" fill="url(#sat)" />
    <g fill="#f02040" opacity=".14">
      <path d="M105 11 120 0h78l-4 6-50 8z" />
      <path d="M70 24l60-11 14 6-50 9z" />
      <path d="M198 14 192 3 210 0h90l-50 8z" />
      <path d="M209 27l45-12 32-2 6 9-50 8z" />
    </g>
    <g fill="#d80420" opacity=".3">
      <path d="M305 0h66v12l-60 3 6-3z" />
      <path d="M282 18l89-6v14l-90 4 10-6z" />
      <path d="M318 38V28l53-2v50h-90l10-26z" />
    </g>
    <g fill="#404868" opacity=".14"><path d="M90 36l50-9 30 6-40 10-60 3z" /><path d="M140 50l60-14 70 4-30 12-110 8z" /></g>
    <rect width="371" height="76" fill="url(#val)" />
    <g fill="#180008" opacity=".18"><path d="M225 36l146-9v8l-150 10z" /><path d="M190 52l181-12v9l-190 10z" /><path d="M120 66l251-14v9l-250 9z" /></g>
    <path d="M0 70.500a5 5 0 0 1 5 5" fill="none" stroke="#fff" />
  </Ramp>
);

const QrCode = () => (
  <Code viewBox="0 0 160 160" role="img" aria-label="预览二维码">
    <defs><filter id="soft" x="-5%" y="-5%" width="110%" height="110%"><feGaussianBlur stdDeviation="0.7" /></filter></defs>
    <path filter="url(#soft)" fill="#e8e8e8" d="M0 7Q9 1 18 9Q24 5 40 6Q58 5 66 3Q76 1 82 6Q92 3 100 6Q108 1 116 1H143Q149 2 152 11L155 27Q159 33 159 45V96H96V150H7Q0 148 0 140L2 95L0 85Z" />
    <path fill="#fff" d="M0 8Q9 3 18 9Q24 6 40 7Q58 6 66 4Q76 3 82 7Q92 4 100 7Q108 2 116 2H143Q149 3 151 10H155V28L158 38V96H155V158H7V153Q1 150 1 140L3 95L0 83Z" />
    <path fill="#000" d="M64 32h64v64h32v32h-32v22q-6 3-11-1-9 3-14 1l-7 1V96H64z" />
    <path fill="#808080" d="M32 64h32v32H32zM32 128h64v23l-40 3-24 1zM128 128h30q3 8 0 15-4 8-16 6-6 0-14 2z" />
    <path fill="#aaa" d="M77 56l2 1-1 3-2-1z" />
  </Code>
);

const optionIcons = (names: string[]) =>
  names.map((n) => <IconButton key={n} aria-label={n} $w={26} $tone="#929292"><Icon name={n} size={18} /></IconButton>);

const TopBars = () => (
  <>
    <MenuBar>
      <PsMark>Ps</PsMark>
      <Menu>{menus.map((m) => <MenuItem key={m}>{m}</MenuItem>)}</Menu>
      <WindowControls>
        <WindowButton $w={27} aria-label="最小化"><svg width="12" height="12"><path fill="currentColor" d="M1 8h10v3H1z" /></svg></WindowButton>
        <WindowButton $w={27} aria-label="还原"><svg width="12" height="12" fill="none" stroke="currentColor" strokeWidth="2"><path d="M5 4V2h6v5H8M1 5h6v5H1z" /></svg></WindowButton>
        <WindowButton $w={46} aria-label="关闭"><svg width="12" height="12" stroke="currentColor" strokeWidth="2"><path d="m2 2 8 8M10 2l-8 8" /></svg></WindowButton>
      </WindowControls>
    </MenuBar>
    <OptionsBar>
      <Spacer $w={11} />
      <IconButton aria-label="主页" $tone="#e6e6e6"><Icon name="home" /></IconButton>
      <Divider />
      <Spacer $w={3} />
      <IconButton aria-label="当前工具" $w={18} $tone="#e0e0e0"><Icon name="move" size={17} /></IconButton>
      <IconButton aria-label="工具预设" $w={24} $tone="#b0b0b0"><Icon name="chevron" size={15} /></IconButton>
      <Divider $m={3} />
      <CheckLabel><Check type="checkbox" defaultChecked />自动选择：</CheckLabel>
      <Spacer $w={9} />
      <Select label="自动选择" value="图层" w={53} />
      <Divider />
      <CheckLabel><Check type="checkbox" />显示变换控件</CheckLabel>
      <Spacer $w={10} />
      <Divider />
      {optionIcons(["alignL", "alignC", "alignR"])}
      <Spacer $w={8} />
      {optionIcons(["distV"])}
      <Divider />
      {optionIcons(["alignT", "alignM", "alignB"])}
      <Spacer $w={8} />
      {optionIcons(["distH"])}
      <Divider $m={9} />
      <IconButton aria-label="更多" $tone="#e0e0e0"><Icon name="more" size={16} /></IconButton>
      <Divider $m={9} />
      <ModeLabel>3D 模式：</ModeLabel>
      {optionIcons(["orbit", "roll", "pan3d", "slide3d", "cam"])}
      <Spacer />
      <IconButton aria-label="搜索"><Icon name="search" size={17} /></IconButton>
      <Spacer $w={6} />
      <IconButton aria-label="工作区"><Icon name="layout" size={18} /></IconButton>
      <IconButton aria-label="工作区列表" $w={20} $tone="#b0b0b0"><Icon name="chevron" size={14} /></IconButton>
      <IconButton aria-label="共享"><Icon name="share" size={18} /></IconButton>
    </OptionsBar>
  </>
);

const ToolColumn = () => (
  <Toolbar>
    <Strip $left><Collapse right label="展开工具栏" /></Strip>
    <ToolList>
      <GripRow><Grip /></GripRow>
      {tools.map(([n, label], i) => (
        <Tool key={n} aria-label={label} $on={i === 0} $corner={!plainTools.includes(n)}><Icon name={n} size={18} /></Tool>
      ))}
      <SwatchTools>
        <svg viewBox="0 0 11 11"><path fill="#ccc" d="M4 4h7v7H4z" /><path fill="#000" stroke="#ddd" d="M.5.500h6v6h-6z" /></svg>
        <svg viewBox="0 0 11 11" fill="none" stroke="#ddd"><path d="M1 3h7v6M3 .5.500 3 3 5.500M5.500 7.500 8 10.500l2.500-3" /></svg>
      </SwatchTools>
      <Swatches $w={29} $h={29} $s={19}><button aria-label="背景色" /><button aria-label="前景色" /></Swatches>
      <ToolFoot>
        <Tool aria-label="快速蒙版"><Icon name="mask" size={18} /></Tool>
        <Tool aria-label="屏幕模式" $corner><Icon name="screens" size={18} /></Tool>
      </ToolFoot>
    </ToolList>
  </Toolbar>
);

const FloatingPanel = () => (
  <Floating>
    <FloatStrip>
      <Collapse label="折叠" />
      <StripButton aria-label="关闭"><svg viewBox="0 0 8 6"><path strokeWidth="2" d="m1.500 0 5 6M6.500 0l-5 6" /></svg></StripButton>
    </FloatStrip>
    <FloatTabs><FloatTab>Design Play</FloatTab><MenuLines aria-label="面板菜单" /></FloatTabs>
    <Play>
      <PlayHead><Icon name="user" size={22} /><h2>Design Play</h2><Icon name="phone" size={23} /></PlayHead>
      <PlayModes>
        <IconButton aria-label="二维码" $tone="#1ea0e0"><Icon name="qr" size={17} /></IconButton>
        <IconButton aria-label="键盘" $tone="#fff"><Icon name="keyboard" size={19} /></IconButton>
        <IconButton aria-label="USB" $tone="#fff"><Icon name="usb" size={18} /></IconButton>
      </PlayModes>
      <QrCode />
      <Caption>用App扫描此二维码进行预览</Caption>
    </Play>
    <PlayBlank><span /></PlayBlank>
    <FloatFoot><Grip /></FloatFoot>
  </Floating>
);

const DocumentArea = () => (
  <Document>
    <DocTabs><DocTab>未标题-1 @ 100%(RGB/8#)<button aria-label="关闭文档">×</button></DocTab></DocTabs>
    <DocBody>
      <RulerCorner />
      <HRuler>{hMarks.map((n, i) => <HCell key={i}>{n}</HCell>)}</HRuler>
      <ScrollColumn />
      <VRuler>{vMarks.map((n, i) => <VCell key={i}>{String(n).split("").map((d, j) => <span key={j}>{d}</span>)}</VCell>)}</VRuler>
      <Viewport><Artboard /><FloatingPanel /></Viewport>
    </DocBody>
    <StatusBar>
      <span>100%</span>
      <StatusInfo>475 像素 x 346 像素 (96.012 ppi)<svg viewBox="0 0 5 10"><path d="m.5.500 3.500 4.500-3.500 4.500" /></svg></StatusInfo>
    </StatusBar>
  </Document>
);

const IconDock = () => (
  <Dock $w={38}>
    <Strip><Collapse label="折叠面板" /></Strip>
    {[["dockHistory", "play"], ["brushSet", "sliders"], ["char", "para"], ["plugin"]].map((g) => (
      <DockGroup key={g[0]}>
        <Grip />
        {g.map((n) => <IconButton key={n} aria-label={n} $w={32} $h={29} $tone="#dcdcdc"><Icon name={n} size={19} /></IconButton>)}
      </DockGroup>
    ))}
  </Dock>
);

const ColorPanel = () => (
  <Panel>
    <Tabs names={["颜色", "色板", "渐变", "图案"]} />
    <ColorBody>
      <Swatches $w={30} $h={34} $s={20} $my={3}><button aria-label="背景色" /><button aria-label="前景色" /></Swatches>
      <ColorRamp />
      <HueMark viewBox="0 0 7 9"><path d="M.5.500h2.500L6.500 4.500 3 8.500H.5z" fill="#f0f0f0" stroke="#333" /></HueMark>
      <Hue />
    </ColorBody>
  </Panel>
);

const PropertiesPanel = () => (
  <Panel>
    <Tabs names={["属性", "调整"]} />
    <DocRow><IconButton $on $w={23} $h={23} aria-label="文档"><Icon name="doc" size={16} /></IconButton>文档</DocRow>
    <PropBody>
      <PropScroll>
        <Section $h={240}>
          <SectionHead><Icon name="chevron" size={18} />画布</SectionHead>
          <SizeGrid>
            <Icon name="link" size={18} />
            <label htmlFor="w">W</label><Field id="w" defaultValue="475 像素" />
            <label htmlFor="x">X</label><Field id="x" $off defaultValue="0 像素" />
            <label htmlFor="h">H</label><Field id="h" defaultValue="346 像素" />
            <label htmlFor="y">Y</label><Field id="y" $off defaultValue="0 像素" />
          </SizeGrid>
          <Orient>
            <IconButton aria-label="纵向"><Icon name="portrait" size={18} /></IconButton>
            <IconButton aria-label="横向" $on><Icon name="landscape" size={18} /></IconButton>
          </Orient>
          <Resolution>分辨率：96.012 像素/...</Resolution>
          <ModeGrid>
            <label htmlFor="mode">模式</label>
            <Select id="mode" label="模式" value="RGB 颜色" w={140} />
            <span />
            <Select label="位深度" value="8 位/通道" w={140} />
            <label htmlFor="canvas-fill">填色</label>
            <FillPick>
              <FillChip aria-label="填色" />
              <Select id="canvas-fill" label="填色" value="白色" w={118} />
            </FillPick>
          </ModeGrid>
        </Section>
        <Section>
          <SectionHead><Icon name="chevron" size={18} />标尺和网格</SectionHead>
          <ToolRow>
            <IconButton $w={25} $h={25} $on aria-label="标尺"><Icon name="rulers" size={19} /></IconButton>
            <IconButton $w={25} $h={25} aria-label="网格"><Icon name="grid" size={19} /></IconButton>
            <IconButton $w={25} $h={25} aria-label="像素网格"><Icon name="checker" size={19} /></IconButton>
            <Select label="单位" value="像素" w={77} />
          </ToolRow>
        </Section>
        <Section>
          <SectionHead><Icon name="chevron" size={18} />参考线</SectionHead>
          <ToolRow>
            <IconButton $w={25} $h={25} $tone="#9a9a9a" aria-label="参考线"><Icon name="guides" size={18} /></IconButton>
            <IconButton $w={25} $h={25} aria-label="锁定参考线"><Icon name="guidesLock" size={18} /></IconButton>
            <IconButton $w={25} $h={25} $on aria-label="智能参考线"><Icon name="guidesSmart" size={18} /></IconButton>
            <Select label="线型" value="" w={77}>
              <svg width="52" height="3" viewBox="0 0 52 3"><path fill="#d0d0d0" d="M7 0h43v3H7z" /></svg>
            </Select>
          </ToolRow>
        </Section>
        <Section $h={52} $last>
          <SectionHead><Icon name="chevron" size={18} />快速操作</SectionHead>
        </Section>
      </PropScroll>
      <ScrollBar><Icon name="chevron" size={16} /><span /><Icon name="chevron" size={16} /></ScrollBar>
    </PropBody>
  </Panel>
);

const PercentField = ({ id }: { id: string }) => (
  <Percent><input id={id} defaultValue="100%" /><button aria-label="调整"><Icon name="chevron" size={13} /></button></Percent>
);

const LayersPanel = () => (
  <Panel $grow>
    <Tabs names={["图层", "通道", "路径"]} />
    <Row $h={34} $top={6} $line>
      <FilterBox>
        <Select label="类型" value="类型" w={85} off pad={21} />
        <Icon name="search" size={12} />
      </FilterBox>
      <Icons $gap={10} $left={16} $right={16}>
        {["image", "adjust", "type", "shape", "smart"].map((n) => <Icon key={n} name={n} size={14} />)}
      </Icons>
      <Toggle aria-label="图层过滤" />
    </Row>
    <Row $h={29} $line>
      <Select label="混合模式" value="正常" w={117} off />
      <Spacer $w={7} />
      <label htmlFor="opacity">不透明度:</label>
      <PercentField id="opacity" />
    </Row>
    <Row $h={31} $bottom={4}>
      <Spacer $w={2} />
      <span>锁定:</span>
      <Icons $gap={8} $left={9} $right={8}>
        {["checkerSolid", "brush", "move", "artboard", "lock"].map((n) => <Icon key={n} name={n} size={14} />)}
      </Icons>
      <label htmlFor="fill">填充:</label>
      <PercentField id="fill" />
    </Row>
    <LayerArea>
      <LayerRow>
        <IconButton $w={30} $h={32} aria-label="可见性" $tone="#e6e6e6"><Icon name="eye" size={14} /></IconButton>
        <LayerMain><Thumb />背景<Spacer /><Icon name="lockOpen" size={14} /></LayerMain>
      </LayerRow>
    </LayerArea>
    <LayerFoot>
      <IconButton $tone="#8c8c8c" aria-label="链接图层"><Icon name="chain" size={15} /></IconButton>
      <IconButton $tone="#8c8c8c" aria-label="图层样式"><Fx>fx</Fx></IconButton>
      <IconButton aria-label="添加蒙版"><Icon name="maskAdd" size={14} /></IconButton>
      <IconButton aria-label="调整图层"><Icon name="adjust" size={14} /></IconButton>
      <IconButton aria-label="新建组"><Icon name="folder" size={14} /></IconButton>
      <IconButton aria-label="新建图层"><Icon name="add" size={14} /></IconButton>
      <IconButton $tone="#8c8c8c" aria-label="删除图层"><Icon name="trash" size={14} /></IconButton>
    </LayerFoot>
  </Panel>
);

const LabelDock = () => (
  <Dock $w={78}>
    <Strip><Collapse label="折叠面板" /></Strip>
    {[["bulb", "学习"], ["library", "库"], ["comments", "Co..."]].map(([n, t]) => (
      <DockGroup key={n}><Grip /><DockItem><Icon name={n} />{t}</DockItem></DockGroup>
    ))}
  </Dock>
);

const TaskbarView = () => (
  <Taskbar>
    <Apps>
      <AppButton aria-label="开始">
        <svg viewBox="0 0 26 26"><path fill="#35b5f5" d="M2 2h10.500v10.500H2z" /><path fill="#1f9be8" d="M13.500 2H24v10.500H13.500z" /><path fill="#1a90e0" d="M2 13.500h10.500V24H2z" /><path fill="#0a78d4" d="M13.500 13.500H24V24H13.500z" /></svg>
      </AppButton>
      <AppButton aria-label="Adobe XD"><XdMark>Xd</XdMark></AppButton>
      <AppButton aria-label="Edge" $mark="#8c8482">
        <svg viewBox="0 0 26 26">
          <defs><linearGradient id="edge"><stop stopColor="#1b9de2" /><stop offset=".6" stopColor="#2cc3d5" /><stop offset="1" stopColor="#5fd85a" /></linearGradient></defs>
          <path fill="url(#edge)" d="M1.500 12C2 5.500 7 1 13 1c7 0 12 4.500 12 10 0 4-3 6-6 6-2.500 0-4-1-3-2.500 1.500-3-1-6-5-6-5 0-8 2-9.500 3.500z" />
          <path fill="#0c59a4" d="M8.500 13c-1 6 4 10 10 9.500 2-.2 4-1 5-2-2 3-6 5-10 5C7 25.500 4 20 6 15z" />
          <path fill="#1273c8" d="M1.300 13C2.500 9.500 6 8.500 10 8.500c3 0 5 1.500 5 3.500-3-1-5.500.5-6 3-.5 4 3 8.500 9 8-2 1.500-4 2-6 2C5 25 .800 19 1.300 13z" />
        </svg>
      </AppButton>
      <AppButton aria-label="微信" $lit $mark="#c8163c">
        <svg viewBox="0 0 26 26"><path fill="#2bd36a" d="M9.500 3c5 0 9 3.200 9 7.500S14.500 18 9.500 18c-1.200 0-2.300-.2-3.300-.5L3 19l.8-2.800C1.800 14.800 1 12.800 1 10.500 1 6.200 4.500 3 9.500 3z" /><circle cx="6.500" cy="8.500" r="1.200" fill="#136b34" /><circle cx="12.500" cy="8.500" r="1.200" fill="#136b34" /><ellipse cx="19" cy="16.500" rx="6.500" ry="5.300" fill="#e2e2e2" /><circle cx="17" cy="15" r=".9" fill="#999" /><circle cx="21" cy="15" r=".9" fill="#999" /></svg>
      </AppButton>
      <AppButton aria-label="游戏" $mark="#8c8482">
        <svg viewBox="0 0 26 26"><circle cx="12" cy="13" r="10.500" fill="#756860" /><path fill="#b09890" d="M2 7c3-2 5-1 6 2s1 8-1 11C3 17 1 12 2 7z" /><path fill="#583030" d="M9 6c4-3 7 0 7 6s-2 8-5 9c-3-3-4-11-2-15z" /><path fill="none" stroke="#cfc8c4" strokeWidth="2.500" d="M13 3c7-2 12 4 9 9s-6 5-5 10" /><path fill="#28282c" d="M14 2c4-1 6 1 8 4l-4-1z" /><path fill="#1c80d8" d="m17 19 8-3-2 6-4 1z" /></svg>
      </AppButton>
      <AppButton aria-label="设置" $mark="#8c8482">
        <svg viewBox="0 0 26 26"><path fill="#767676" d="m10.500 1-1 3.300-2.200 1.200L4 4.500 1 9.500l2.500 2.400v2.200L1 16.500l3 5 3.300-1 2.200 1.200 1 3.300h5l1-3.300 2.200-1.200 3.300 1 3-5-2.500-2.400v-2.200L25 9.500l-3-5-3.300 1-2.200-1.200-1-3.300z" /><circle cx="13" cy="13" r="5.500" fill="#1267b4" stroke="#e8f0f8" strokeWidth="2" /></svg>
      </AppButton>
      <AppButton aria-label="WPS" $mark="#8c8482">
        <svg viewBox="0 0 26 26">
          <path fill="#d81c28" d="M1 5h6.500l4 13-2 6H7z" />
          <path fill="#ff7a20" d="M9.500 24 7 20 12 9h5z" />
          <path fill="#ee2c22" d="M12 9h5l3 10-2 5h-3z" />
          <path fill="#ff5a1c" d="m15.500 24 2-9 3-7H25l-6 16z" />
          <path fill="#5aaee4" d="M17 3.500C18 0 26 0 26 4v6h-9z" /><path fill="#e4f2fc" d="M19.500 4h2v4h3v1h-5z" />
        </svg>
      </AppButton>
      <AppButton aria-label="Photoshop" $lit $wide $mark="#1272c4"><PsMark $big>Ps</PsMark></AppButton>
    </Apps>
    <Tray>
      <TrayButton $w={24} aria-label="显示隐藏的图标"><Icon name="up" size={16} /></TrayButton>
      <TrayButton $w={26} aria-label="浏览器">
        <svg width="16" height="16" viewBox="0 0 16 16" fill="none" strokeWidth="3"><circle cx="8" cy="8" r="7" fill="#fff" stroke="none" /><path stroke="#2f9a48" d="M6 1.800A6.500 6.500 0 0 1 14.500 8" /><path stroke="#d83030" d="M14 10A6.500 6.500 0 0 1 4 13" /><path stroke="#f4c820" d="M3 12A6.500 6.500 0 0 1 5 2.300" /><circle cx="8" cy="8" r="3" fill="#2880c8" /></svg>
      </TrayButton>
      <TrayButton $w={30} aria-label="输入法"><Ime>中</Ime></TrayButton>
      <Spacer $w={6} />
      <TrayButton $w={24} aria-label="网络"><Icon name="wifi" size={16} /></TrayButton>
      <TrayButton $w={24} aria-label="静音"><Icon name="mute" size={16} /></TrayButton>
      <TrayButton $w={24} aria-label="电池"><Icon name="battery" size={16} /></TrayButton>
      <Clock>15:06<br />2022/1/4</Clock>
      <TrayButton $w={16} aria-label="通知"><Icon name="moon" size={15} /></TrayButton>
    </Tray>
  </Taskbar>
);

export default function App() {
  return (
    <Shell>
      <Global />
      <TopBars />
      <Workspace>
        <ToolColumn />
        <DocumentArea />
        <IconDock />
        <Panels>
          <Strip><Collapse right label="展开面板" /></Strip>
          <ColorPanel />
          <PropertiesPanel />
          <LayersPanel />
        </Panels>
        <LabelDock />
      </Workspace>
      <TaskbarView />
      <Meter />
    </Shell>
  );
}
